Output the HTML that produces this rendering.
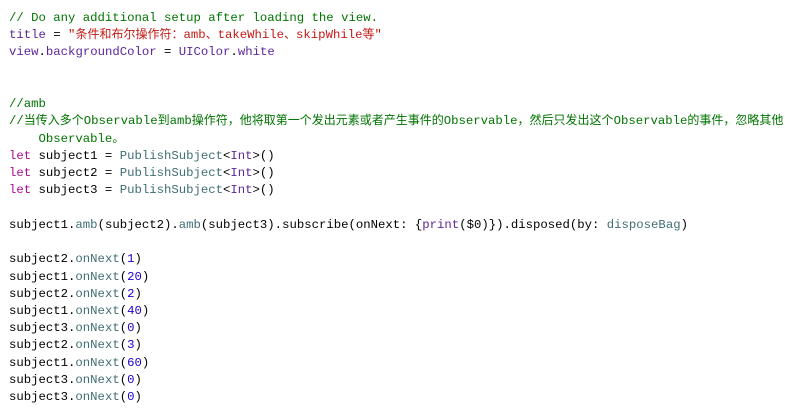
<!DOCTYPE html>
<html><head><meta charset="utf-8"><style>
html,body{margin:0;padding:0;background:#fff;width:785px;height:417px;overflow:hidden}
pre{position:absolute;left:9px;top:10px;margin:0;font-family:"Liberation Mono","Noto Sans CJK SC",monospace;font-size:12.3px;line-height:17.23px;color:#000;white-space:pre}
.c{color:#007400}.k{color:#aa0d91}.s{color:#c41a16}.n{color:#1c00cf}.p{color:#5c2699}.t{color:#3f6e74}
.j{font-family:"Noto Sans CJK SC",sans-serif;font-size:12px;display:inline-block;line-height:12px}
</style></head><body>
<pre><span class="c">// Do any additional setup after loading the view.</span>
<span class="p">title</span> = <span class="s">"<span class="j">条件和布尔操作符：</span>amb<span class="j">、</span>takeWhile<span class="j">、</span>skipWhile<span class="j">等</span>"</span>
<span class="p">view</span>.<span class="p">backgroundColor</span> = <span class="p">UIColor</span>.<span class="p">white</span>


<span class="c">//amb</span>
<span class="c">//<span class="j">当传入多个</span>Observable<span class="j">到</span>amb<span class="j">操作符，他将取第一个发出元素或者产生事件的</span>Observable<span class="j">，然后只发出这个</span>Observable<span class="j">的事件，忽略其他</span></span>
<span class="c">    Observable<span class="j">。</span></span>
<span class="k">let</span> subject1 = <span class="t">PublishSubject</span>&lt;<span class="p">Int</span>&gt;()
<span class="k">let</span> subject2 = <span class="t">PublishSubject</span>&lt;<span class="p">Int</span>&gt;()
<span class="k">let</span> subject3 = <span class="t">PublishSubject</span>&lt;<span class="p">Int</span>&gt;()

subject1.<span class="t">amb</span>(subject2).<span class="t">amb</span>(subject3).subscribe(onNext: {<span class="p">print</span>($0)}).disposed(by: <span class="t">disposeBag</span>)

subject2.<span class="t">onNext</span>(<span class="n">1</span>)
subject1.<span class="t">onNext</span>(<span class="n">20</span>)
subject2.<span class="t">onNext</span>(<span class="n">2</span>)
subject1.<span class="t">onNext</span>(<span class="n">40</span>)
subject3.<span class="t">onNext</span>(<span class="n">0</span>)
subject2.<span class="t">onNext</span>(<span class="n">3</span>)
subject1.<span class="t">onNext</span>(<span class="n">60</span>)
subject3.<span class="t">onNext</span>(<span class="n">0</span>)
subject3.<span class="t">onNext</span>(<span class="n">0</span>)</pre>
</body></html>
